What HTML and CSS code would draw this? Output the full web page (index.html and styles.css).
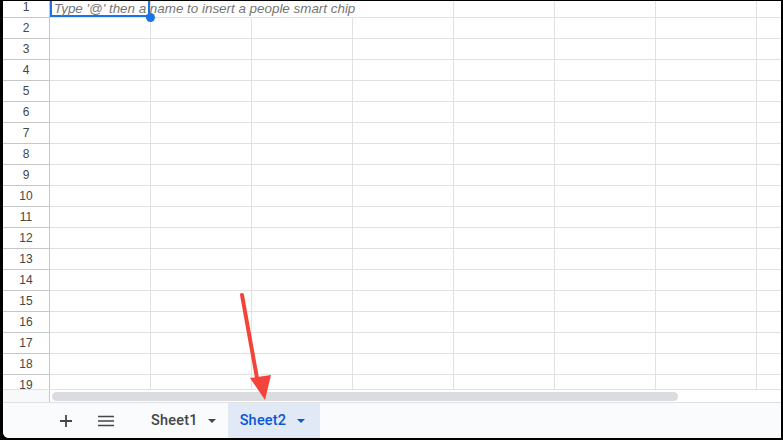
FILE: index.html
```html
<!DOCTYPE html>
<html>
<head>
<meta charset="utf-8">
<link rel="stylesheet" href="styles.css">
</head>
<body>
<div class="frame">
  <div class="sheet">
    <div class="grid-wrap">
      <div class="grid" id="grid"></div>
    </div>
    <div class="hscroll">
      <div class="hs-corner"></div>
      <div class="hs-track"><div class="hs-thumb"></div></div>
    </div>
    <div class="tabbar">
      <button class="tb-icon plus" aria-label="Add sheet">
        <svg width="14" height="14" viewBox="0 0 14 14"><path d="M7 1v12M1 7h12" stroke="#444746" stroke-width="1.8" fill="none"/></svg>
      </button>
      <button class="tb-icon menu" aria-label="All sheets">
        <svg width="16" height="12" viewBox="0 0 16 12"><path d="M0 1.5h16M0 6h16M0 10.5h16" stroke="#444746" stroke-width="1.6" fill="none"/></svg>
      </button>
      <div class="tab">Sheet1<span class="caret"></span></div>
      <div class="tab active">Sheet2<span class="caret"></span></div>
    </div>
  </div>
  <svg class="arrow" width="783" height="440" viewBox="0 0 783 440">
    <line x1="242" y1="295" x2="257" y2="378" stroke="#f4433a" stroke-width="4" stroke-linecap="round"/>
    <polygon points="250,378 271,375 265,400" fill="#f4433a"/>
  </svg>
</div>
<script src="script.js"></script>
</body>
</html>
```
FILE: styles.css
```css
html, body { margin: 0; padding: 0; background: #000; }
.frame {
  position: relative;
  width: 783px;
  height: 440px;
  box-sizing: border-box;
  background: #000;
  padding: 1px 2px 2px 3px;
  overflow: hidden;
}
.sheet {
  width: 778px;
  height: 437px;
  background: #fff;
  display: flex;
  flex-direction: column;
  border-bottom-left-radius: 6px;
  overflow: hidden;
  font-family: Arial, "Liberation Sans", sans-serif;
}
.grid-wrap {
  height: 388px;
  flex: none;
  overflow: hidden;
}
.grid {
  margin-top: -4px;
  display: grid;
  grid-template-columns: 47px repeat(8, 101px);
  grid-auto-rows: 21px;
  align-content: start;
}
.grid .rh {
  border-right: 1px solid #c4c7c5;
  border-bottom: 1px solid #c4c7c5;
  font-size: 12px;
  color: #444746;
  display: flex;
  align-items: center;
  justify-content: center;
  padding-bottom: 1px;
  background: #fff;
}
.grid .c {
  border-right: 1px solid #e1e1e1;
  border-bottom: 1px solid #e1e1e1;
  position: relative;
}
.grid .c.nob { border-right-color: transparent; }
.sel {
  position: relative;
  box-shadow: inset 0 0 0 2px #1a73e8;
  z-index: 2;
}
.sel .txt {
  position: absolute;
  left: 4px;
  top: 4px;
  white-space: nowrap;
  font-style: italic;
  font-size: 13.4px;
  line-height: 15px;
  color: #757575;
}
.sel .handle {
  position: absolute;
  right: -5px;
  bottom: -5px;
  width: 9px;
  height: 9px;
  border-radius: 50%;
  background: #1a73e8;
  z-index: 3;
}
.hscroll {
  height: 12px;
  flex: none;
  border-top: 1px solid #e1e1e1;
  border-bottom: 1px solid #e1e1e1;
  display: flex;
}
.hs-corner {
  width: 46px;
  border-right: 1px solid #c4c7c5;
  background: #f8f9fa;
}
.hs-track {
  flex: 1;
  padding: 2px 0 1px 2px;
}
.hs-thumb {
  width: 626px;
  height: 9px;
  background: #dadce0;
  border-radius: 5px;
}
.tabbar {
  flex: 1;
  background: #f9fbfd;
  display: flex;
  align-items: stretch;
  padding-left: 46px;
}
.tb-icon {
  border: 0;
  background: transparent;
  padding: 0;
  display: flex;
  align-items: center;
  justify-content: center;
}
.tb-icon.plus { width: 34px; }
.tb-icon.menu { width: 46px; }
.tab {
  display: flex;
  align-items: center;
  font-family: Roboto, "Liberation Sans", sans-serif;
  font-weight: 500;
  font-size: 14.5px;
  color: #444746;
  padding: 0 12px 0 16px;
  letter-spacing: 0.2px;
}
.tab:nth-child(3) { margin-left: 6px; }
.tab .caret {
  display: inline-block;
  margin-left: 10px;
  width: 0; height: 0;
  border-left: 4.5px solid transparent;
  border-right: 4.5px solid transparent;
  border-top: 4.5px solid #444746;
}
.tab.active {
  background: #e1e9f7;
  color: #0b57d0;
  padding: 0 12px;
  width: 92px;
  box-sizing: border-box;
}
.tab.active .caret { border-top-color: #0b57d0; margin-left: 11px; }
.arrow {
  position: absolute;
  left: 0; top: 0;
  pointer-events: none;
}
```
FILE: script.js
```js
const g = document.getElementById('grid');
let html = '';
for (let r = 1; r <= 19; r++) {
  html += '<div class="rh">' + r + '</div>';
  for (let c = 0; c < 8; c++) {
    if (r === 1 && c === 0) {
      html += '<div class="c sel"><span class="txt">Type \'@\' then a name to insert a people smart chip</span><span class="handle"></span></div>';
    } else if (r === 1 && (c === 1 || c === 2)) {
      html += '<div class="c nob"></div>';
    } else {
      html += '<div class="c"></div>';
    }
  }
}
g.innerHTML = html;
```
